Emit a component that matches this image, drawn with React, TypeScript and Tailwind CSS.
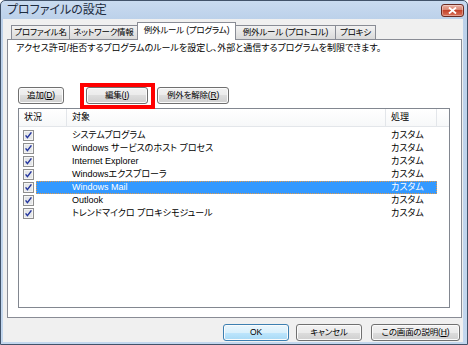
import type { ReactNode } from "react";

type Rule = { name: string; action: string; selected?: boolean };

const rules: Rule[] = [
  { name: "システムプログラム", action: "カスタム" },
  { name: "Windows サービスのホスト プロセス", action: "カスタム" },
  { name: "Internet Explorer", action: "カスタム" },
  { name: "Windowsエクスプローラ", action: "カスタム" },
  { name: "Windows Mail", action: "カスタム", selected: true },
  { name: "Outlook", action: "カスタム" },
  { name: "トレンドマイクロ プロキシモジュール", action: "カスタム" },
];

const tabs = [
  { label: "プロファイル名", w: "w-[59px]" },
  { label: "ネットワーク情報", w: "w-[69px]" },
  { label: "例外ルール (プログラム)", w: "w-[99px]", active: true },
  { label: "例外ルール (プロトコル)", w: "w-[101px]" },
  { label: "プロキシ", w: "w-[41px]" },
];

function Btn({ children, w, primary }: { children: ReactNode; w: string; primary?: boolean }) {
  return (
    <div
      className={`${w} h-[17px] flex items-center justify-center whitespace-nowrap rounded-[3px] border text-[8.5px] tracking-[-0.2px] leading-none shadow-[inset_0_0_0_1px_#fbfbfb] ${
        primary
          ? "border-[#3c7fb1] bg-[linear-gradient(to_bottom,#eaf6fd_0%,#d9f0fc_50%,#bee6fd_50%,#a7d9f5_100%)]"
          : "border-[#707070] bg-[linear-gradient(to_bottom,#f2f2f2_0%,#ebebeb_50%,#dddddd_50%,#cfcfcf_100%)]"
      }`}
    >
      {children}
    </div>
  );
}

function CheckBox() {
  return (
    <svg width="11" height="11" viewBox="0 0 11 11">
      <rect x="0.5" y="0.5" width="10" height="10" fill="#f6f6f6" stroke="#8f8f8f" />
      <rect x="1.5" y="1.5" width="8" height="8" fill="#e4e6e8" stroke="#f4f4f4" />
      <path d="M2.6 5.4 L4.4 7.6 L8.4 2.4" stroke="#23349e" strokeWidth="1.5" fill="none" />
    </svg>
  );
}

function CloseButton() {
  return (
    <div className="w-[23px] h-[13px] rounded-[3px] border border-[#6b2b22] bg-[linear-gradient(to_bottom,#eab0a2_0%,#d8806b_50%,#c4432c_50%,#d9725a_100%)] flex items-center justify-center shadow-[inset_0_0_0_1px_rgba(255,255,255,0.35)]">
      <svg width="9" height="7" viewBox="0 0 9 7">
        <path d="M1 0.5 L8 6.5 M8 0.5 L1 6.5" stroke="#ffffff" strokeWidth="1.8" />
      </svg>
    </div>
  );
}

export default function App() {
  return (
    <div className="w-[468px] h-[345px] flex flex-col border border-[#42536a] rounded-t-[5px] overflow-hidden bg-[linear-gradient(to_bottom,#c9dbf0,#bcd1ea_18px,#c3d7ee)] font-['Liberation_Sans','Noto_Sans_CJK_JP',sans-serif] [font-feature-settings:'palt'] text-black">
      {/* title bar */}
      <div className="h-[18px] flex items-center justify-between pl-[6px] pr-[3px]">
        <span className="text-[12px] leading-none text-[#1e2c40]">プロファイルの設定</span>
        <CloseButton />
      </div>

      <div className="flex-1 ml-[2px] mr-[4px] mb-[2px] bg-[#f0f0f0] pl-[4px] pr-[1px] pt-[3px] flex flex-col">
        {/* tabs */}
        <div className="h-[17px] flex items-end pl-[4px]">
          {tabs.map((t, i) => (
            <div
              key={t.label}
              className={`${t.w} ${i > 0 ? "-ml-px" : ""} flex items-center justify-center whitespace-nowrap border border-b-0 border-[#898c95] text-[8.5px] tracking-[-0.2px] leading-none ${
                t.active
                  ? "h-[18px] -mb-px relative z-10 bg-white pb-[2px]"
                  : "h-[14px] bg-[linear-gradient(to_bottom,#f2f2f2,#e6e6e6_50%,#dadada)]"
              }`}
            >
              {t.label}
            </div>
          ))}
        </div>

        {/* tab page */}
        <div className="h-[279px] border border-[#898c95] bg-white flex flex-col">
          <p className="pt-[2px] pl-[8px] text-[9px] leading-[12px] whitespace-nowrap">
            アクセス許可/拒否するプログラムのルールを設定し、外部と通信するプログラムを制限できます。
          </p>

          <div className="mt-[33px] h-[17px] flex pl-[10px]">
            <Btn w="w-[46px]">
              追加(<span className="underline">D</span>)
            </Btn>
            <div className="relative ml-[22px]">
              <Btn w="w-[62px]">
                編集(<span className="underline">I</span>)
              </Btn>
              <div className="absolute -left-[6px] -right-[7px] -top-[4px] -bottom-[5px] border-4 border-[#ff0000]" />
            </div>
            <div className="ml-[9px]">
              <Btn w="w-[72px]">
                例外を解除(<span className="underline">R</span>)
              </Btn>
            </div>
          </div>

          {/* list view */}
          <div className="mt-[4px] ml-[10px] w-[432px] h-[200px] border border-[#828790] bg-white flex flex-col">
            <div className="h-[18px] flex text-[9px] leading-none bg-[linear-gradient(to_bottom,#ffffff,#f7f8f9)] border-b border-[#e3e6ea]">
              <div className="w-[48px] pl-[5px] flex items-center border-r border-[#e3e6ea]">状況</div>
              <div className="w-[319px] pl-[5px] flex items-center border-r border-[#e3e6ea]">対象</div>
              <div className="w-[51px] pl-[5px] flex items-center border-r border-[#e3e6ea]">処理</div>
              <div className="flex-1" />
            </div>
            <div className="pt-[2px] flex flex-col">
              {rules.map((r) => (
                <div key={r.name} className="h-[13px] flex items-center text-[9px] leading-none">
                  <div className="w-[17px] pl-[4px] flex items-center">
                    <CheckBox />
                  </div>
                  <div
                    className={`w-[401px] h-full flex items-center ${
                      r.selected
                        ? "bg-[#3399ff] text-white outline-1 outline-dotted outline-[#e39a4a] -outline-offset-1"
                        : ""
                    }`}
                  >
                    <span className="w-[355px] pl-[36px] whitespace-nowrap">{r.name}</span>
                    <span>{r.action}</span>
                  </div>
                </div>
              ))}
            </div>
          </div>
        </div>

        {/* dialog buttons */}
        <div className="pt-[6px] pr-[2px] flex justify-end">
          <Btn w="w-[66px]" primary>
            OK
          </Btn>
          <div className="ml-[7px]">
            <Btn w="w-[66px]">キャンセル</Btn>
          </div>
          <div className="ml-[9px]">
            <Btn w="w-[89px]">
              この画面の説明(<span className="underline">H</span>)
            </Btn>
          </div>
        </div>
      </div>
    </div>
  );
}
